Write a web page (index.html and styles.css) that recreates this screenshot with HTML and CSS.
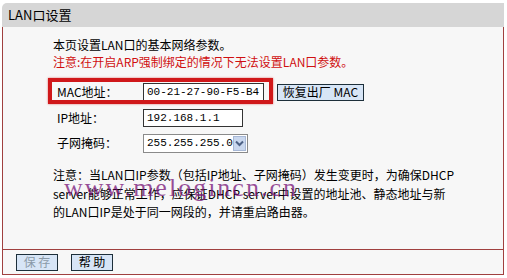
FILE: index.html
```html
<html lang="zh-CN">
<head>
  <meta charset="UTF-8">
  <title>LAN口设置</title>
  <link rel="stylesheet" href="styles.css">
</head>
<body>

<div class="frame">
  <div class="head">LAN口设置</div>

  <div class="panel">
    <p class="intro">本页设置LAN口的基本网络参数。</p>
    <p class="intro warn">注意:在开启ARP强制绑定的情况下无法设置LAN口参数。</p>

    <div class="row mark">
      <span class="lbl">MAC地址：</span>
      <input type="text" class="box mac" value="00-21-27-90-F5-B4">
      <button class="btn clone">恢复出厂 MAC</button>
    </div>
    <div class="row">
      <span class="lbl">IP地址：</span>
      <input type="text" class="box ip" value="192.168.1.1">
    </div>
    <div class="row">
      <span class="lbl">子网掩码：</span>
      <div class="sel">
        <span class="selval">255.255.255.0</span>
        <span class="arrow">
          <svg width="9" height="7" viewBox="0 0 9 7"><path d="M1 1.5 L4.5 5 L8 1.5" fill="none" stroke="#4d6185" stroke-width="2"/></svg>
        </span>
      </div>
    </div>

    <p class="note">注意：当LAN口IP参数（包括IP地址、子网掩码）发生变更时，为确保DHCP<br>server能够正常工作，应保证DHCP server中设置的地址池、静态地址与新<br>的LAN口IP是处于同一网段的，并请重启路由器。</p>
    <div class="stamp">www.melogincn.cn</div>
  </div>

  <div class="foot">
    <button class="btn off">保 存</button>
    <button class="btn">帮 助</button>
  </div>
</div>

</body>
</html>
```

FILE: styles.css
```css
body {
    margin: 0;
    background: #fff;
    font-family: "Noto Sans CJK SC", "Liberation Sans", sans-serif;
    font-size: 12px;
    color: #000;
}
.frame {
    width: 502px;
    margin: 3px 0 0 2px;
}
.head {
    height: 24px;
    line-height: 24px;
    padding-left: 6px;
    background: #d6d6d6;
    border-radius: 5px 0 0 0;
    font-size: 13px;
}
.panel {
    position: relative;
    background: #f7f7f7;
    border-left: 1px solid #a0403f;
    border-right: 1px solid #a0403f;
    border-bottom: 1px solid #a0403f;
    height: 223px;
    padding: 9px 0 0 50px;
    box-sizing: border-box;
}
.intro {
    margin: 0;
    line-height: 17px;
}
.warn {
    color: #d01010;
}
.row {
    position: relative;
    display: flex;
    align-items: center;
    height: 18px;
    margin: 0 0 7px 0;
    padding-left: 4px;
}
.row > * {
    flex-shrink: 0;
    white-space: nowrap;
}
.mark {
    margin: 13px 0 8px 0;
}
/* red highlight frame drawn over the MAC row */
.mark::before {
    content: "";
    position: absolute;
    left: -5px;
    top: -5px;
    width: 225px;
    height: 26px;
    box-sizing: border-box;
    border: 4px solid #d0181a;
    box-shadow: 0 0 2px #e07070;
}
.lbl {
    width: 86px;
    line-height: 18px;
}
.box {
    height: 18px;
    box-sizing: border-box;
    border: 1px solid #333;
    background: #fff;
    font-family: "Liberation Mono", monospace;
    font-size: 11px;
    padding: 0 3px;
    margin: 0;
}
.mac {
    width: 121px;
}
.ip {
    width: 100px;
}
.btn {
    height: 17px;
    box-sizing: border-box;
    background: #d7e5f6;
    border: 1px solid #1d2f3a;
    font-family: "Noto Sans CJK SC", "Liberation Sans", sans-serif;
    font-size: 12px;
    line-height: 14px;
    padding: 0 6px;
    margin: 0;
    color: #000;
    white-space: nowrap;
}
.clone {
    margin-left: 13px;
    width: 87px;
    padding: 0;
}
.sel {
    display: flex;
    align-items: center;
    width: 105px;
    height: 19px;
    box-sizing: border-box;
    border: 1px solid #8a8a8a;
    background: #fff;
}
.selval {
    flex: 1;
    padding-left: 3px;
    font-family: "Liberation Mono", monospace;
    font-size: 11px;
}
.arrow {
    display: flex;
    align-items: center;
    justify-content: center;
    width: 16px;
    height: 15px;
    margin-right: 1px;
    background: #c9d7ee;
    border: 1px solid #a7b8d6;
    box-sizing: border-box;
}
.note {
    margin: 14px 0 0 0;
    line-height: 18.5px;
    white-space: nowrap;
}
.stamp {
    position: absolute;
    left: 61px;
    top: 146px;
    font-family: "Liberation Serif", serif;
    font-size: 26px;
    letter-spacing: 2px;
    color: rgba(120, 20, 120, 0.75);
}
.foot {
    display: flex;
    gap: 13px;
    height: 25px;
    align-items: center;
    padding-left: 13px;
    background: #f7f7f7;
    border-left: 1px solid #a0403f;
    border-right: 1px solid #a0403f;
    border-bottom: 1px solid #a0403f;
    box-sizing: border-box;
}
.foot .btn {
    width: 42px;
    padding: 0;
}
.off {
    color: #8a9aa8;
}
```
